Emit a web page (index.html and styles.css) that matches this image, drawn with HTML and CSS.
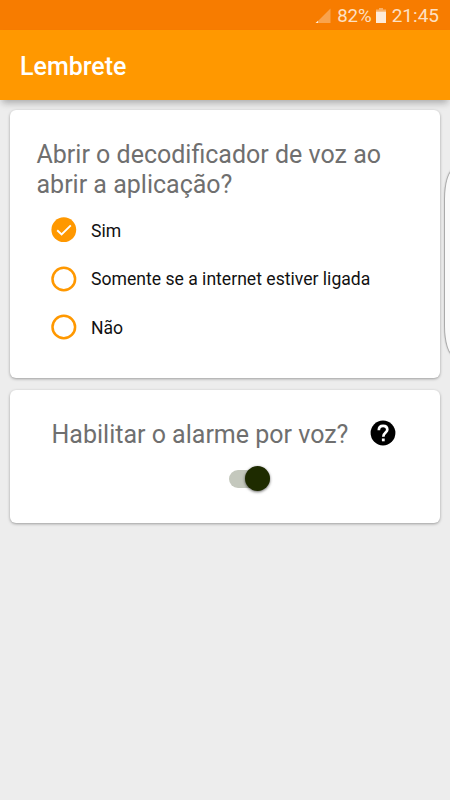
FILE: index.html
```html
<!DOCTYPE html>
<html lang="pt-BR">
<head>
    <meta charset="UTF-8">
    <meta name="viewport" content="width=device-width, initial-scale=1.0">
    <title>Lembrete</title>
    <link rel="stylesheet" href="styles.css">
</head>
<body>
    <!-- Barra de status -->
    <div class="status-bar">
        <svg class="signal" width="16" height="16" viewBox="0 0 16 16">
            <path d="M15.5 0.5V15H1Z" fill="#fff" fill-opacity="0.3"/>
            <path d="M3 12.7V15H0.5Z" fill="#fff" fill-opacity="0.8"/>
        </svg>
        <span class="percent">82%</span>
        <svg class="battery" width="10" height="15" viewBox="0 0 10 15">
            <path d="M3 0h4v1.5h3V3.5H0V1.5h3z" fill="#fff" fill-opacity="0.4"/>
            <path d="M0 3.5h10V15H0z" fill="#fff" fill-opacity="0.85"/>
        </svg>
        <span class="clock">21:45</span>
    </div>

    <header class="toolbar">
        <h1>Lembrete</h1>
    </header>

    <main class="content">
        <!-- Abertura do decodificador -->
        <section class="card card-voice">
            <h2>Abrir o decodificador de voz ao abrir a aplicação?</h2>
            <div class="options">
                <label class="option">
                    <input type="radio" name="decoder" checked>
                    <svg class="mark" width="26" height="26" viewBox="0 0 26 26">
                        <circle cx="12.8" cy="12.7" r="12.4" fill="#ff9800"/>
                        <path d="M6.2 13.3L10.6 17.5L19.8 8.3" fill="none" stroke="#fff" stroke-width="1.9"/>
                    </svg>
                    <span>Sim</span>
                </label>
                <label class="option">
                    <input type="radio" name="decoder">
                    <svg class="mark" width="26" height="26" viewBox="0 0 26 26">
                        <circle cx="12.8" cy="13" r="11.3" fill="none" stroke="#ff9800" stroke-width="2.5"/>
                    </svg>
                    <span>Somente se a internet estiver ligada</span>
                </label>
                <label class="option">
                    <input type="radio" name="decoder">
                    <svg class="mark" width="26" height="26" viewBox="0 0 26 26">
                        <circle cx="12.8" cy="13" r="11.3" fill="none" stroke="#ff9800" stroke-width="2.5"/>
                    </svg>
                    <span>Não</span>
                </label>
            </div>
        </section>

        <!-- Alarme por voz -->
        <section class="card card-alarm">
            <div class="alarm-row">
                <h2>Habilitar o alarme por voz?</h2>
                <svg class="help" width="30" height="30" viewBox="0 0 30 30">
                    <circle cx="15" cy="15" r="12.4"/>
                    <path d="M10.8 12.2C10.8 9.3 12.5 7.8 15.1 7.8S19.3 9.4 19.3 11.8C19.3 14.5 15.3 14.7 15.3 18.7" fill="none" stroke="#fff" stroke-width="2.7"/>
                    <path d="M13.9 20.5h2.8v2.8h-2.8z" fill="#fff"/>
                </svg>
            </div>
            <div class="switch"><span class="thumb"></span></div>
        </section>
    </main>

    <!-- Alça do painel lateral -->
    <div class="edge-handle"></div>
</body>
</html>
```

FILE: styles.css
```css
* {
    box-sizing: border-box;
}

body {
    margin: 0;
    height: 100vh;
    position: relative;
    overflow: hidden;
    background: #ededed;
    font-family: Roboto, sans-serif;
}

/* Barra de status */
.status-bar {
    height: 30px;
    padding: 1px 11px 0 0;
    display: flex;
    justify-content: flex-end;
    align-items: center;
    background: #f77c00;
    color: #fde0c4;
    font-size: 19px;
}

.signal {
    margin-right: 6px;
}

.percent {
    font-size: 18.6px;
}

.battery {
    margin: 0 6px 0 4px;
}

/* Barra do aplicativo */
.toolbar {
    height: 70px;
    padding: 3px 20px 0;
    display: flex;
    align-items: center;
    background: #ff9800;
    box-shadow: 0 5px 7px -2px rgba(0, 0, 0, 0.28);
}

h1 {
    margin: 0;
    color: #fff;
    font-size: 25px;
    font-weight: 500;
}

/* Cartões */
.content {
    padding: 10px;
    display: flex;
    flex-direction: column;
    gap: 12.6px;
}

.card {
    background: #fff;
    border-radius: 6px;
    box-shadow: 0 1px 3px rgba(0, 0, 0, 0.35);
}

.card-voice {
    height: 267.8px;
    padding: 30px 27px 0 26.5px;
}

.card-alarm {
    height: 132.3px;
    padding: 27px 42px 0 41.5px;
}

h2 {
    margin: 0;
    color: #6f6f6f;
    font-size: 25px;
    font-weight: 400;
    line-height: 29.5px;
}

/* Opções */
.options {
    padding: 18px 0 0 14.5px;
    display: flex;
    flex-direction: column;
    gap: 22.7px;
}

.option {
    display: flex;
    align-items: center;
    gap: 14px;
    height: 26px;
    color: #111;
    font-size: 17.6px;
}

.option span {
    padding-top: 1px;
}

.option input {
    display: none;
}

/* Chave liga/desliga */
.alarm-row {
    display: flex;
    justify-content: space-between;
    align-items: center;
}

.alarm-row h2 {
    padding-top: 3px;
    margin-bottom: -1px;
}

.switch {
    width: 41px;
    height: 18px;
    margin: 21px 0 0 177.5px;
    display: flex;
    align-items: center;
    justify-content: flex-end;
    border-radius: 9px;
    background: #c4c8bd;
}

.thumb {
    flex: none;
    width: 25px;
    height: 25px;
    border-radius: 50%;
    background: #1e2b00;
    box-shadow: 0 1px 3px rgba(0, 0, 0, 0.6);
}

/* Só a borda esquerda da alça aparece na tela */
.edge-handle {
    position: absolute;
    top: 169px;
    right: -14px;
    width: 20px;
    height: 187px;
    border: 1px solid #aaa;
    border-radius: 12px / 36px;
    background: #fafafa;
    box-shadow: 0 0 2px rgba(0, 0, 0, 0.2);
}
```
